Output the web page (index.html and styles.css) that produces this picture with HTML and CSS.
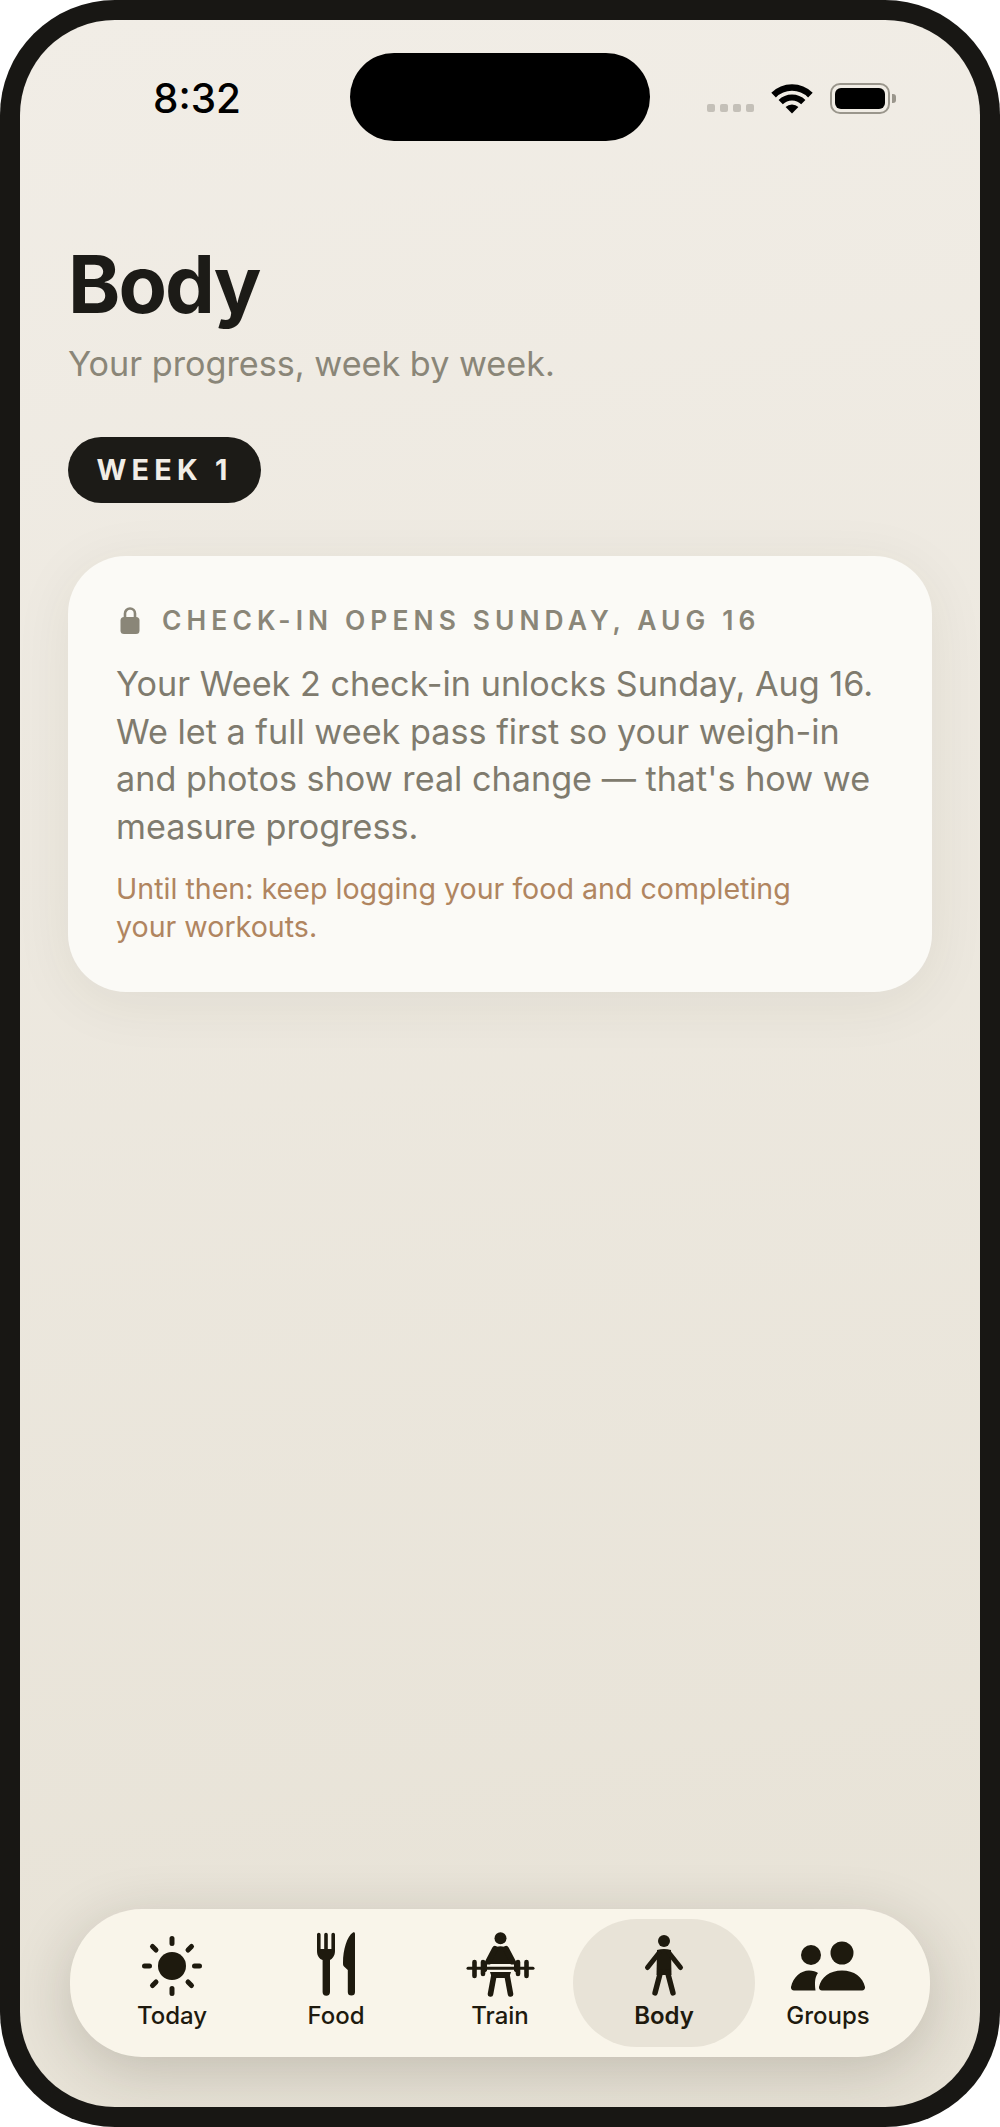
FILE: index.html
```html
<!DOCTYPE html>
<html lang="en">
<head>
  <meta charset="UTF-8" />
  <meta name="viewport" content="width=device-width, initial-scale=1.0"/>
  <title>Body</title>
  <link rel="stylesheet" href="styles.css">
</head>
<body>
  <div class="phone">
    <div class="screen">
      <div class="island"></div>

      <div class="status-bar">
        <span class="clock">8:32</span>
        <div class="status-icons">
          <div class="signal"><i></i><i></i><i></i><i></i></div>
          <svg class="wifi" viewBox="0 0 42 31" width="42" height="31">
            <path d="M2.6 12.1A26 26 0 0 1 39.4 12.1" fill="none" stroke="#000" stroke-width="6.5"/>
            <path d="M9.7 19.2A16 16 0 0 1 32.3 19.2" fill="none" stroke="#000" stroke-width="6"/>
            <path d="M21 30.5L14.6 24.1A9 9 0 0 1 27.4 24.1z" fill="#000"/>
          </svg>
          <div class="battery"><div class="battery-fill"></div></div>
          <div class="battery-nub"></div>
        </div>
      </div>

      <main class="content">
        <h1 class="title">Body</h1>
        <p class="subtitle">Your progress, week by week.</p>
        <div class="week-pill">WEEK 1</div>

        <section class="card">
          <div class="card-label">
            <svg class="lock" viewBox="0 0 20 28" width="20" height="28">
              <path d="M5 13V7.5a5 5 0 0 1 10 0V13" fill="none" stroke="#8a8678" stroke-width="2.6"/>
              <rect x="0.5" y="11" width="19" height="17" rx="3.5" fill="#8a8678"/>
            </svg>
            <span>CHECK-IN OPENS SUNDAY, AUG 16</span>
          </div>
          <p class="card-text">Your Week 2 check-in unlocks Sunday, Aug 16. We let a full week pass first so your weigh-in and photos show real change — that's how we measure progress.</p>
          <p class="card-hint">Until then: keep logging your food and completing your workouts.</p>
        </section>
      </main>

      <nav class="tab-bar">
        <div class="tab">
          <svg viewBox="0 0 80 68" width="80" height="68">
            <circle cx="40" cy="36" r="14" fill="#1e1a0e"/>
            <path d="M40 8.5V13.5M40 58.5V63.5M12.5 36H17.5M62.5 36H67.5M20.5 16.5L24 20M56 52L59.5 55.5M59.5 16.5L56 20M24 52L20.5 55.5" stroke="#1e1a0e" stroke-width="5" stroke-linecap="round"/>
          </svg>
          <span>Today</span>
        </div>
        <div class="tab">
          <svg viewBox="0 0 80 68" width="80" height="68">
            <path d="M21 4.5a1.8 1.8 0 0 1 3.6 0V19h3.6V4.5a1.8 1.8 0 0 1 3.6 0V19h3.6V4.5a1.8 1.8 0 0 1 3.6 0V21c0 5-3 8-5 9V62a3.7 3.7 0 0 1-7.4 0V30c-3-1-5.6-4-5.6-9z" fill="#1e1a0e"/>
            <path d="M59 4V62a3.6 3.6 0 0 1-7.2 0V40L48 36.5c-1-1-1-2-1-4C47 20 51 6 57 2.5c1-.6 2-.2 2 1.5z" fill="#1e1a0e"/>
          </svg>
          <span>Food</span>
        </div>
        <div class="tab">
          <svg viewBox="0 0 80 68" width="80" height="68">
            <circle cx="40.5" cy="8.3" r="6" fill="#1e1a0e"/>
            <path d="M33 18Q40.5 14.5 48 18L52 34H29z" fill="#1e1a0e"/>
            <path d="M35 19L24.5 39M46 19L56.5 39" stroke="#1e1a0e" stroke-width="6" stroke-linecap="round"/>
            <path d="M27 38H54" stroke="#f9f5ea" stroke-width="7"/>
            <path d="M8 38.3H73" stroke="#1e1a0e" stroke-width="3" stroke-linecap="round"/>
            <path d="M14.5 32V46M23 32V44M58 32V44M66.5 32V46" stroke="#1e1a0e" stroke-width="4.6" stroke-linecap="round"/>
            <path d="M30 42H51L49 48H32z" fill="#1e1a0e"/>
            <path d="M34 45L30.5 64M47 45L50.5 64" stroke="#1e1a0e" stroke-width="5.6" stroke-linecap="round"/>
          </svg>
          <span>Train</span>
        </div>
        <div class="tab active">
          <svg viewBox="0 0 80 68" width="80" height="68">
            <circle cx="40" cy="11" r="6" fill="#1e1a0e"/>
            <path d="M33 20Q40 18 47 20L47.5 45H32.5z" fill="#1e1a0e"/>
            <path d="M35 23L23.5 37.5M45 23L56.5 37.5" stroke="#1e1a0e" stroke-width="5" stroke-linecap="round"/>
            <path d="M36.5 42L31 63M43.5 42L49 63" stroke="#1e1a0e" stroke-width="5.4" stroke-linecap="round"/>
          </svg>
          <span>Body</span>
        </div>
        <div class="tab">
          <svg viewBox="0 0 80 68" width="80" height="68">
            <circle cx="23" cy="25" r="10" fill="#1e1a0e"/>
            <circle cx="54" cy="23" r="11.5" fill="#1e1a0e"/>
            <path d="M34 60.5a3 3 0 0 1-3-3.5C33 47 42 40.5 54 40.5S75 47 77 57a3 3 0 0 1-3 3.5z" fill="#1e1a0e"/>
            <path d="M6 60.5a3 3 0 0 1-3-3.5C5 47 13 40.5 21 40.5c4 0 7 1 9 2.5C27 47 26.5 52 27.5 60.5z" fill="#1e1a0e"/>
          </svg>
          <span>Groups</span>
        </div>
      </nav>
    </div>
  </div>
</body>
</html>
```

FILE: styles.css
```css
html, body {
  margin: 0;
  padding: 0;
  background: #fff;
  font-family: 'Inter', sans-serif;
}

.phone {
  width: 1000px;
  height: 2127px;
  padding: 20px;
  box-sizing: border-box;
  background: #181714;
  border-radius: 115px;
}

.screen {
  position: relative;
  height: 100%;
  display: flex;
  flex-direction: column;
  border-radius: 95px;
  overflow: hidden;
  background: linear-gradient(172deg, #f1ede6 0%, #e7e2d6 100%);
}

.island {
  position: absolute;
  top: 33px;
  left: 330px;
  width: 300px;
  height: 88px;
  border-radius: 44px;
  background: #000;
}

.status-bar {
  display: flex;
  align-items: center;
  justify-content: space-between;
  height: 50px;
  margin-top: 53px;
  padding: 0 84px 0 133px;
}

.clock {
  font-size: 40.4px;
  font-weight: 500;
  color: #000;
}

.status-icons {
  display: flex;
  align-items: center;
}

.signal {
  display: flex;
  gap: 5px;
  margin: 20px 17px 0 0;
}

.signal i {
  width: 8px;
  height: 8px;
  border-radius: 2px;
  background: #c4c0b8;
}

.wifi {
  margin-right: 17px;
}

.battery {
  width: 60px;
  height: 31px;
  box-sizing: border-box;
  padding: 3px;
  border: 2px solid #9a968c;
  border-radius: 10px;
}

.battery-fill {
  height: 100%;
  border-radius: 6px;
  background: #000;
}

.battery-nub {
  width: 4px;
  height: 9px;
  margin-left: 2px;
  border-radius: 0 3px 3px 0;
  background: #9a968c;
}

.content {
  padding: 0 48px;
}

.title {
  margin: 113px 0 0;
  font-size: 79.2px;
  line-height: 96px;
  font-weight: 700;
  letter-spacing: -2px;
  color: #1c1b17;
}

.subtitle {
  margin: 8px 0 0;
  font-size: 34.2px;
  line-height: 48px;
  color: #8a8678;
}

.week-pill {
  display: inline-block;
  margin-top: 49px;
  padding: 0 28.5px;
  height: 66px;
  line-height: 66px;
  border-radius: 33px;
  background: #1c1b17;
  color: #f1ede6;
  font-size: 28.8px;
  font-weight: 700;
  letter-spacing: 5.2px;
}

.card {
  margin-top: 53px;
  padding: 50px 48px 45px;
  border-radius: 58px;
  background: #fbfaf6;
  box-shadow: 0 10px 60px rgba(60, 50, 30, 0.07);
}

.card-label {
  display: flex;
  align-items: center;
  gap: 22px;
  height: 28px;
  padding-left: 4px;
  color: #8a8678;
  font-size: 26.4px;
  font-weight: 600;
  letter-spacing: 5.1px;
}

.card-text {
  margin: 26px 0 0;
  font-size: 34.2px;
  line-height: 47.7px;
  color: #7f7b6e;
}

.card-hint {
  max-width: 700px;
  margin: 19px 0 0;
  font-size: 28.6px;
  line-height: 38.4px;
  color: #b08560;
}

.tab-bar {
  display: grid;
  grid-template-columns: repeat(5, 1fr);
  height: 148px;
  margin: auto 50px 50px;
  padding: 0 20px;
  box-sizing: border-box;
  border-radius: 72px;
  background: #f9f5ea;
  box-shadow: 0 14px 60px rgba(40, 35, 20, 0.2);
}

.tab {
  display: flex;
  flex-direction: column;
  align-items: center;
  padding-top: 21px;
  box-sizing: border-box;
  color: #1e1a0e;
}

.tab svg {
  display: block;
}

.tab span {
  margin-top: 3px;
  font-size: 24px;
  line-height: 30px;
  font-weight: 500;
}

.tab.active {
  margin: 10px -9px;
  padding-top: 11px;
  border-radius: 64px;
  background: #e8e3d7;
}

.tab.active span {
  font-weight: 600;
}
```
